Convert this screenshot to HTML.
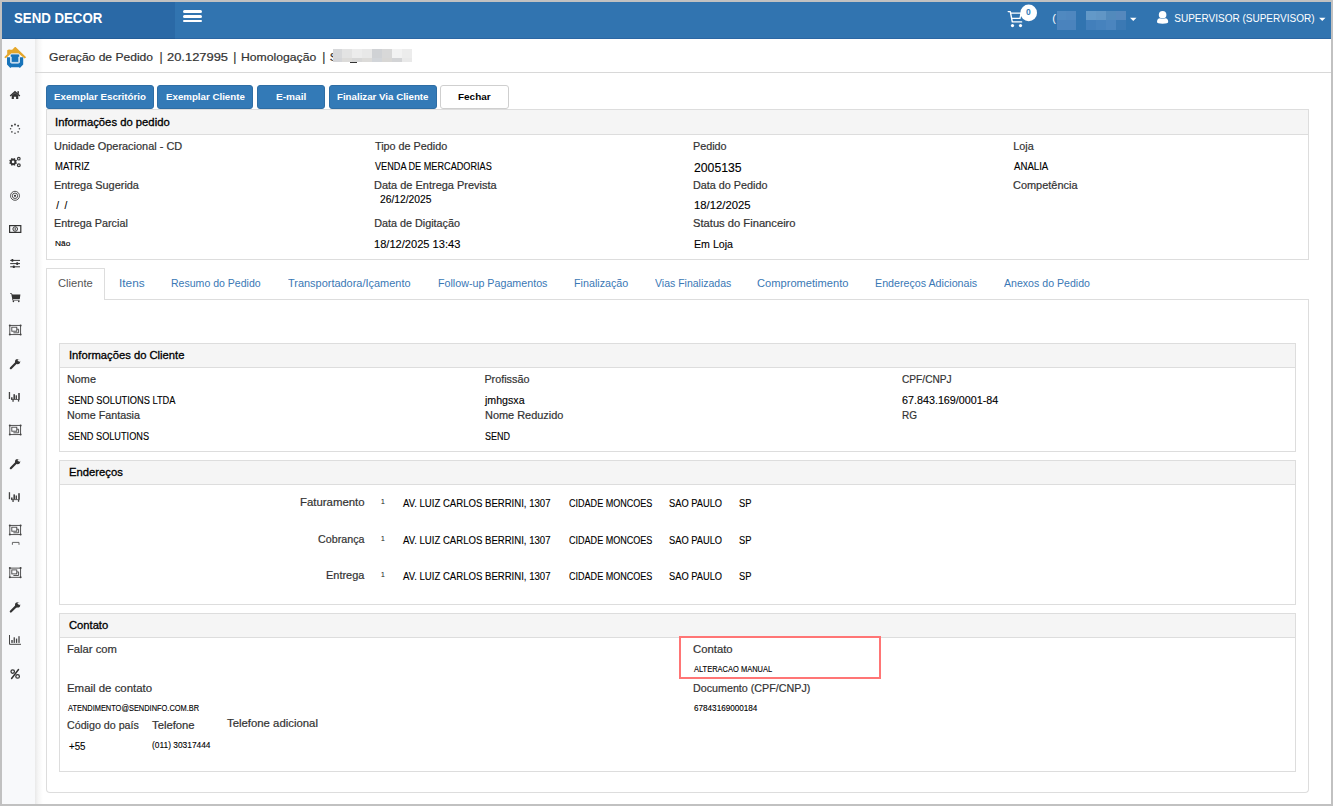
<!DOCTYPE html>
<html><head><meta charset="utf-8"><title>Geração de Pedido</title>
<style>
*{box-sizing:border-box;margin:0;padding:0}
html,body{width:1333px;height:806px;overflow:hidden;background:#fff;position:relative}
.a{position:absolute}
.t{position:absolute;display:block}
.frame{position:absolute;left:0;top:0;width:1333px;height:806px;border:2px solid #c1c1c1;z-index:50;pointer-events:none}
.nav{left:2px;top:2px;width:1329px;height:37px;background:#3174b0;border-bottom:1px solid #2b66a3}
.brand{left:2px;top:2px;width:173px;height:37px;background:#2a69a6;border-bottom:1px solid #245d98}
.side{left:2px;top:39px;width:33px;height:765px;background:#f8f9fb}
.shadow{left:35px;top:39px;width:8px;height:765px;background:linear-gradient(to right,#e9e9e9,#f6f6f6 40%,#fff)}
.hdrline{left:35px;top:72px;width:1296px;height:1px;background:#d8d8d8}
.btn{position:absolute;top:85px;height:24px;background:#337ab7;border:1px solid #2e6da4;border-radius:3px}
.btnw{background:#fff;border-color:#cfcfcf}
.panel{position:absolute;border:1px solid #ddd;background:#fff}
.ph{position:absolute;left:0;top:0;right:0;height:24px;background:#f5f5f5;border-bottom:1px solid #ddd}
.red{left:679px;top:636px;width:202px;height:43px;border:2px solid #ff7575;z-index:5}
</style></head><body>
<div class="a nav"></div><div class="a brand"></div><div class="a" style="left:183px;top:10.2px;width:19px;height:2.9px;border-radius:1.5px;background:#fff"></div><div class="a" style="left:183px;top:14.8px;width:19px;height:2.9px;border-radius:1.5px;background:#fff"></div><div class="a" style="left:183px;top:19.5px;width:19px;height:2.9px;border-radius:1.5px;background:#fff"></div><svg class="a" style="left:1000px;top:2px" width="45" height="30" viewBox="1000 2 45 30">
<path d="M1008.2 11.6 H1010.3 L1012.3 21.9 H1021.6" fill="none" stroke="#fff" stroke-width="1.4" stroke-linecap="round" stroke-linejoin="round"/>
<path d="M1010.6 13.2 H1021 L1020 18.4 H1011.6" fill="none" stroke="#fff" stroke-width="1.3" stroke-linejoin="round"/>
<circle cx="1012.5" cy="25.6" r="1.6" fill="#fff"/><circle cx="1020.5" cy="25.6" r="1.6" fill="#fff"/>
<circle cx="1028.7" cy="12.9" r="8.3" fill="#fff"/>
</svg><div class="a" style="left:1057px;top:11px;width:9px;height:9px;background:#5089c0"></div><div class="a" style="left:1057px;top:20px;width:9px;height:10px;background:#4a83bd"></div><div class="a" style="left:1066px;top:11px;width:10px;height:9px;background:#4f87bf"></div><div class="a" style="left:1066px;top:20px;width:10px;height:10px;background:#4a83bd"></div><div class="a" style="left:1086px;top:11px;width:10px;height:9px;background:#6399c8"></div><div class="a" style="left:1086px;top:20px;width:10px;height:10px;background:#427fbb"></div><div class="a" style="left:1096px;top:11px;width:10px;height:9px;background:#6196c5"></div><div class="a" style="left:1096px;top:20px;width:10px;height:10px;background:#4682bd"></div><div class="a" style="left:1106px;top:11px;width:10px;height:9px;background:#528abc"></div><div class="a" style="left:1106px;top:20px;width:10px;height:10px;background:#4b85bf"></div><div class="a" style="left:1116px;top:11px;width:10px;height:9px;background:#5588bd"></div><div class="a" style="left:1116px;top:20px;width:10px;height:10px;background:#3b79b4"></div><svg class="a" style="left:1130px;top:17px" width="7" height="5" viewBox="0 0 7 5"><path d="M0 0.8 H6.5 L3.25 4 Z" fill="#fff"/></svg><svg class="a" style="left:1319px;top:17px" width="7" height="5" viewBox="0 0 7 5"><path d="M0 0.8 H6.5 L3.25 4 Z" fill="#fff"/></svg><svg class="a" style="left:1155px;top:9px" width="15" height="16" viewBox="1155 9 15 16">
<circle cx="1162.6" cy="14.8" r="3.8" fill="#fff"/>
<path d="M1157 22 Q1157 18.6 1160 18.3 Q1162.6 19.6 1165.2 18.3 Q1168.2 18.6 1168.2 22 Q1168.2 23.7 1162.6 23.7 Q1157 23.7 1157 22 Z" fill="#fff"/>
</svg><div class="a side"></div><div class="a shadow"></div><svg class="a" style="left:2px;top:44px" width="28" height="28" viewBox="2 44 28 28">
<path d="M4.2 57.2 L7.2 54.3 V50.3 Q8.6 49 10.6 49.8 L12.2 49.8 L14.9 47 L15.6 47 L26.2 57.2 L24.6 58.4 L18.6 53.6 H11.2 L5.8 58.2 Z" fill="#e5a72b"/>
<path d="M7 57.2 H10.2 V62 Q10.2 63.4 11.8 63.4 H18.2 Q19.8 63.4 19.8 62 V57.2 H23.2 V64.6 L20.6 67.2 L19.8 68 L19 67.2 H11.3 L10.4 68 L9.6 67.2 L7 64.6 Z" fill="#1874ba"/>
<path d="M10.4 55.4 Q10.4 54 11.8 54 H18.2 Q19.6 54 19.6 55.4 Q19.6 56.5 18.8 56.9 V62.4 H11.2 V56.9 Q10.4 56.5 10.4 55.4 Z" fill="#1874ba" stroke="#d3e3f0" stroke-width="0.9"/>
</svg><svg class="a" style="left:0;top:0" width="35" height="806" viewBox="0 0 35 806"><path d="M10.2 96.1 L15 91.7 L19.8 96.1" fill="none" stroke="#333" stroke-width="1.4"/><path d="M11.7 95.6 L15 92.8 L18.3 95.6 V99 H16.1 V96.8 H13.9 V99 H11.7 Z" fill="#333"/><rect x="17.4" y="91.2" width="1.5" height="2.6" fill="#333"/><circle cx="15.00" cy="124.40" r="1.0" fill="#444"/><circle cx="18.11" cy="125.69" r="1.0" fill="#444"/><circle cx="19.40" cy="128.80" r="0.8" fill="#444"/><circle cx="18.11" cy="131.91" r="0.8" fill="#444"/><circle cx="15.00" cy="133.20" r="0.8" fill="#444"/><circle cx="11.89" cy="131.91" r="0.8" fill="#444"/><circle cx="10.60" cy="128.80" r="0.8" fill="#444"/><circle cx="11.89" cy="125.69" r="1.0" fill="#444"/><circle cx="13.1" cy="161.9" r="2.2" fill="none" stroke="#333" stroke-width="1.8"/><rect x="12.35" y="158.00" width="1.5" height="1.6" fill="#333" transform="rotate(22.5 13.1 161.9)"/><rect x="12.35" y="158.00" width="1.5" height="1.6" fill="#333" transform="rotate(67.5 13.1 161.9)"/><rect x="12.35" y="158.00" width="1.5" height="1.6" fill="#333" transform="rotate(112.5 13.1 161.9)"/><rect x="12.35" y="158.00" width="1.5" height="1.6" fill="#333" transform="rotate(157.5 13.1 161.9)"/><rect x="12.35" y="158.00" width="1.5" height="1.6" fill="#333" transform="rotate(202.5 13.1 161.9)"/><rect x="12.35" y="158.00" width="1.5" height="1.6" fill="#333" transform="rotate(247.5 13.1 161.9)"/><rect x="12.35" y="158.00" width="1.5" height="1.6" fill="#333" transform="rotate(292.5 13.1 161.9)"/><rect x="12.35" y="158.00" width="1.5" height="1.6" fill="#333" transform="rotate(337.5 13.1 161.9)"/><circle cx="18.8" cy="158.7" r="1.3" fill="none" stroke="#3a3a3a" stroke-width="1.2"/><circle cx="18.8" cy="165.2" r="1.4" fill="none" stroke="#3a3a3a" stroke-width="1.2"/><circle cx="15" cy="195.8" r="4.5" fill="none" stroke="#444" stroke-width="0.9"/><circle cx="15" cy="195.8" r="2.7" fill="none" stroke="#444" stroke-width="0.9"/><circle cx="15" cy="195.8" r="1.1" fill="#333"/><rect x="9.6" y="225.6" width="11.2" height="6.8" fill="none" stroke="#333" stroke-width="1.2"/><ellipse cx="15.2" cy="229" rx="2.3" ry="2.3" fill="none" stroke="#333" stroke-width="1"/><rect x="14.7" y="227.6" width="1" height="2.8" fill="#333"/><rect x="10.2" y="259.9" width="9.8" height="1" fill="#333"/><rect x="11.4" y="259.09999999999997" width="2" height="2.6" rx="0.6" fill="#333"/><rect x="10.2" y="263.1" width="9.8" height="1" fill="#333"/><rect x="16.2" y="262.3" width="2" height="2.6" rx="0.6" fill="#333"/><rect x="10.2" y="266.3" width="9.8" height="1" fill="#333"/><rect x="12.8" y="265.5" width="2" height="2.6" rx="0.6" fill="#333"/><path d="M10.1 293.2 H11.6 L12.6 294.6 H20.4 L19.8 299 H13 L13.2 299.8 H19.6 V300.6 H12.5 L11.3 294 H10.1 Z" fill="#333"/><circle cx="13.4" cy="301.4" r="0.8" fill="#333"/><circle cx="18.8" cy="301.4" r="0.8" fill="#333"/><rect x="9.8" y="325.40000000000003" width="10.8" height="9.2" fill="none" stroke="#444" stroke-width="0.9"/><circle cx="9.8" cy="325.40000000000003" r="1" fill="#444"/><circle cx="20.6" cy="325.40000000000003" r="1" fill="#444"/><circle cx="9.8" cy="334.6" r="1" fill="#444"/><circle cx="20.6" cy="334.6" r="1" fill="#444"/><rect x="11.8" y="327.20000000000005" width="5" height="4" fill="none" stroke="#444" stroke-width="0.9"/><path d="M13.4 332.8 H18.6 V329.20000000000005 H16.8" fill="none" stroke="#444" stroke-width="0.9"/><path d="M10.8 368.2 L16.2 362.8" stroke="#333" stroke-width="2.2" stroke-linecap="round"/><circle cx="17.6" cy="361.6" r="2.6" fill="#333"/><path d="M17.8 359.5 L19.2 360.9 L20.6 359" stroke="#f8f9fb" stroke-width="1.4" fill="none"/><rect x="8.8" y="392.00" width="1.3" height="7" fill="#444"/><rect x="11" y="397.30" width="1.6" height="2.2" fill="#444"/><rect x="13.4" y="394.20" width="1.6" height="5" fill="#444"/><rect x="15.6" y="395.30" width="1.4" height="4" fill="#444"/><rect x="18.2" y="393.00" width="1.6" height="6" fill="#444"/><rect x="12.4" y="399.20" width="1.3" height="2.6" fill="#444"/><rect x="17.9" y="399.20" width="1.3" height="2.4" fill="#444"/><rect x="11" y="399.10" width="8.8" height="0.8" fill="#444"/><rect x="9.8" y="425.40000000000003" width="10.8" height="9.2" fill="none" stroke="#444" stroke-width="0.9"/><circle cx="9.8" cy="425.40000000000003" r="1" fill="#444"/><circle cx="20.6" cy="425.40000000000003" r="1" fill="#444"/><circle cx="9.8" cy="434.6" r="1" fill="#444"/><circle cx="20.6" cy="434.6" r="1" fill="#444"/><rect x="11.8" y="427.20000000000005" width="5" height="4" fill="none" stroke="#444" stroke-width="0.9"/><path d="M13.4 432.8 H18.6 V429.20000000000005 H16.8" fill="none" stroke="#444" stroke-width="0.9"/><path d="M10.8 468.2 L16.2 462.8" stroke="#333" stroke-width="2.2" stroke-linecap="round"/><circle cx="17.6" cy="461.6" r="2.6" fill="#333"/><path d="M17.8 459.5 L19.2 460.9 L20.6 459" stroke="#f8f9fb" stroke-width="1.4" fill="none"/><rect x="8.8" y="492.20" width="1.3" height="7" fill="#444"/><rect x="11" y="497.50" width="1.6" height="2.2" fill="#444"/><rect x="13.4" y="494.40" width="1.6" height="5" fill="#444"/><rect x="15.6" y="495.50" width="1.4" height="4" fill="#444"/><rect x="18.2" y="493.20" width="1.6" height="6" fill="#444"/><rect x="12.4" y="499.40" width="1.3" height="2.6" fill="#444"/><rect x="17.9" y="499.40" width="1.3" height="2.4" fill="#444"/><rect x="11" y="499.30" width="8.8" height="0.8" fill="#444"/><rect x="9.8" y="525.4" width="10.8" height="9.2" fill="none" stroke="#444" stroke-width="0.9"/><circle cx="9.8" cy="525.4" r="1" fill="#444"/><circle cx="20.6" cy="525.4" r="1" fill="#444"/><circle cx="9.8" cy="534.6" r="1" fill="#444"/><circle cx="20.6" cy="534.6" r="1" fill="#444"/><rect x="11.8" y="527.2" width="5" height="4" fill="none" stroke="#444" stroke-width="0.9"/><path d="M13.4 532.8000000000001 H18.6 V529.2 H16.8" fill="none" stroke="#444" stroke-width="0.9"/><path d="M12.4 544.8 V542.4 H19 V544.8" fill="none" stroke="#555" stroke-width="0.9"/><rect x="9.8" y="568.0999999999999" width="10.8" height="9.2" fill="none" stroke="#444" stroke-width="0.9"/><circle cx="9.8" cy="568.0999999999999" r="1" fill="#444"/><circle cx="20.6" cy="568.0999999999999" r="1" fill="#444"/><circle cx="9.8" cy="577.3" r="1" fill="#444"/><circle cx="20.6" cy="577.3" r="1" fill="#444"/><rect x="11.8" y="569.9" width="5" height="4" fill="none" stroke="#444" stroke-width="0.9"/><path d="M13.4 575.5 H18.6 V571.9 H16.8" fill="none" stroke="#444" stroke-width="0.9"/><path d="M10.8 611.5 L16.2 606.0999999999999" stroke="#333" stroke-width="2.2" stroke-linecap="round"/><circle cx="17.6" cy="604.9" r="2.6" fill="#333"/><path d="M17.8 602.8 L19.2 604.1999999999999 L20.6 602.3" stroke="#f8f9fb" stroke-width="1.4" fill="none"/><path d="M9.5 635 V644.3 H21" fill="none" stroke="#444" stroke-width="1"/><rect x="11.3" y="640" width="1.4" height="2.9" fill="#444"/><rect x="13.6" y="637.3" width="1.3" height="5.6" fill="#444"/><rect x="15.9" y="638.6" width="1.3" height="4.3" fill="#444"/><rect x="18.3" y="636.2" width="1.4" height="6.7" fill="#555"/><circle cx="12.7" cy="671.5" r="1.75" fill="none" stroke="#333" stroke-width="1.25"/><circle cx="17.6" cy="676.4" r="1.8" fill="none" stroke="#333" stroke-width="1.25"/><path d="M11.6 678.5 L18.5 669.5" stroke="#333" stroke-width="1.5" stroke-linecap="round"/></svg><div class="a hdrline"></div><div class="a" style="left:350px;top:62px;width:7px;height:1px;background:#333"></div><div class="btn" style="left:46px;width:108px"></div><div class="btn" style="left:157px;width:96px"></div><div class="btn" style="left:257px;width:68px"></div><div class="btn" style="left:329px;width:108px"></div><div class="btn btnw" style="left:440px;width:69px"></div><div class="panel" style="left:46px;top:109px;width:1263px;height:151px"><div class="ph" style="height:25px"></div></div><div class="a" style="left:46px;top:299px;width:1263px;height:494px;border:1px solid #ddd;border-top:none;border-radius:0 0 4px 4px"></div><div class="a" style="left:104px;top:299px;width:1205px;height:1px;background:#ddd"></div><div class="a" style="left:46px;top:268px;width:59px;height:32px;border:1px solid #ddd;border-bottom:none;border-radius:1px 1px 0 0;background:#fff"></div><div class="panel" style="left:59px;top:343px;width:1237px;height:109px"><div class="ph" style="height:24px"></div></div><div class="panel" style="left:59px;top:460px;width:1237px;height:145px"><div class="ph" style="height:24px"></div></div><div class="panel" style="left:59px;top:613px;width:1237px;height:159px"><div class="ph" style="height:24px"></div></div><div class="a red"></div>
<span class=t style="left:13.85px;top:10px;font-family:'Liberation Sans',sans-serif;font-size:15.5px;font-weight:bold;line-height:15.5px;white-space:pre;color:#fff;transform:scaleX(0.8539);transform-origin:0 0">SEND DECOR</span><span class=t style="left:1174.30px;top:14px;font-family:'Liberation Sans',sans-serif;font-size:10px;font-weight:normal;line-height:10px;white-space:pre;color:#fff">SUPERVISOR (SUPERVISOR)</span><span class=t style="left:1052.30px;top:13px;font-family:'Liberation Sans',sans-serif;font-size:11px;font-weight:normal;line-height:11px;white-space:pre;color:#fff">(</span><span class=t style="left:1026.00px;top:8px;font-family:'Liberation Sans',sans-serif;font-size:8.5px;font-weight:bold;line-height:8.5px;white-space:pre;color:#337ab7">0</span><span class=t style="left:49.09px;top:52px;font-family:'Liberation Sans',sans-serif;font-size:11.5px;font-weight:normal;line-height:11.5px;white-space:pre;-webkit-text-stroke:0.2px #333;color:#333;transform:scaleX(1.0498);transform-origin:0 0">Geração de Pedido</span><span class=t style="left:159.50px;top:51px;font-family:'Liberation Sans',sans-serif;font-size:12px;font-weight:normal;line-height:12px;white-space:pre;-webkit-text-stroke:0.2px #333;color:#333">|</span><span class=t style="left:166.98px;top:52px;font-family:'Liberation Sans',sans-serif;font-size:11.5px;font-weight:normal;line-height:11.5px;white-space:pre;-webkit-text-stroke:0.2px #333;color:#333;transform:scaleX(1.1232);transform-origin:0 0">20.127995</span><span class=t style="left:233.30px;top:51px;font-family:'Liberation Sans',sans-serif;font-size:12px;font-weight:normal;line-height:12px;white-space:pre;-webkit-text-stroke:0.2px #333;color:#333">|</span><span class=t style="left:240.74px;top:52px;font-family:'Liberation Sans',sans-serif;font-size:11.5px;font-weight:normal;line-height:11.5px;white-space:pre;-webkit-text-stroke:0.2px #333;color:#333;transform:scaleX(1.0600);transform-origin:0 0">Homologação</span><span class=t style="left:322.20px;top:51px;font-family:'Liberation Sans',sans-serif;font-size:12px;font-weight:normal;line-height:12px;white-space:pre;-webkit-text-stroke:0.2px #333;color:#333">|</span><span class=t style="left:329.76px;top:52px;font-family:'Liberation Sans',sans-serif;font-size:11.5px;font-weight:normal;line-height:11.5px;white-space:pre;-webkit-text-stroke:0.2px #333;color:#333">S</span><span class=t style="left:53.58px;top:92px;font-family:'Liberation Sans',sans-serif;font-size:9.5px;font-weight:bold;line-height:9.5px;white-space:pre;color:#fff;transform:scaleX(1.0236);transform-origin:0 0">Exemplar Escritório</span><span class=t style="left:165.68px;top:92px;font-family:'Liberation Sans',sans-serif;font-size:9.5px;font-weight:bold;line-height:9.5px;white-space:pre;color:#fff;transform:scaleX(1.0228);transform-origin:0 0">Exemplar Cliente</span><span class=t style="left:275.58px;top:92px;font-family:'Liberation Sans',sans-serif;font-size:9.5px;font-weight:bold;line-height:9.5px;white-space:pre;color:#fff;transform:scaleX(1.0623);transform-origin:0 0">E-mail</span><span class=t style="left:337.26px;top:92px;font-family:'Liberation Sans',sans-serif;font-size:9.5px;font-weight:bold;line-height:9.5px;white-space:pre;color:#fff;transform:scaleX(1.0215);transform-origin:0 0">Finalizar Via Cliente</span><span class=t style="left:458.15px;top:92px;font-family:'Liberation Sans',sans-serif;font-size:9.5px;font-weight:bold;line-height:9.5px;white-space:pre;color:#000;transform:scaleX(1.0467);transform-origin:0 0">Fechar</span><span class=t style="left:55.30px;top:117px;font-family:'Liberation Sans',sans-serif;font-size:11px;font-weight:normal;line-height:11px;white-space:pre;-webkit-text-stroke:0.3px #000;color:#000;transform:scaleX(1.0247);transform-origin:0 0">Informações do pedido</span><span class=t style="left:54.41px;top:141px;font-family:'Liberation Sans',sans-serif;font-size:10.8px;font-weight:normal;line-height:10.8px;white-space:pre;-webkit-text-stroke:0.2px #333;color:#333;transform:scaleX(1.0121);transform-origin:0 0">Unidade Operacional - CD</span><span class=t style="left:54.68px;top:162px;font-family:'Liberation Sans',sans-serif;font-size:10px;font-weight:normal;line-height:10px;white-space:pre;-webkit-text-stroke:0.12px #000;color:#000;transform:scaleX(0.9480);transform-origin:0 0">MATRIZ</span><span class=t style="left:53.99px;top:180px;font-family:'Liberation Sans',sans-serif;font-size:10.8px;font-weight:normal;line-height:10.8px;white-space:pre;-webkit-text-stroke:0.2px #333;color:#333;transform:scaleX(1.0108);transform-origin:0 0">Entrega Sugerida</span><span class=t style="left:56.20px;top:201px;font-family:'Liberation Sans',sans-serif;font-size:10px;font-weight:normal;line-height:10px;white-space:pre;-webkit-text-stroke:0.12px #000;color:#000">/  /</span><span class=t style="left:54.00px;top:218px;font-family:'Liberation Sans',sans-serif;font-size:10.8px;font-weight:normal;line-height:10.8px;white-space:pre;-webkit-text-stroke:0.2px #333;color:#333">Entrega Parcial</span><span class=t style="left:54.76px;top:240px;font-family:'Liberation Sans',sans-serif;font-size:8px;font-weight:normal;line-height:8px;white-space:pre;-webkit-text-stroke:0.12px #000;color:#000;transform:scaleX(1.0447);transform-origin:0 0">Não</span><span class=t style="left:375.00px;top:141px;font-family:'Liberation Sans',sans-serif;font-size:10.8px;font-weight:normal;line-height:10.8px;white-space:pre;-webkit-text-stroke:0.2px #333;color:#333">Tipo de Pedido</span><span class=t style="left:374.64px;top:162px;font-family:'Liberation Sans',sans-serif;font-size:10px;font-weight:normal;line-height:10px;white-space:pre;-webkit-text-stroke:0.12px #000;color:#000;transform:scaleX(0.9135);transform-origin:0 0">VENDA DE MERCADORIAS</span><span class=t style="left:374.16px;top:180px;font-family:'Liberation Sans',sans-serif;font-size:10.8px;font-weight:normal;line-height:10.8px;white-space:pre;-webkit-text-stroke:0.2px #333;color:#333;transform:scaleX(1.0167);transform-origin:0 0">Data de Entrega Prevista</span><span class=t style="left:380.12px;top:195px;font-family:'Liberation Sans',sans-serif;font-size:10px;font-weight:normal;line-height:10px;white-space:pre;-webkit-text-stroke:0.12px #000;color:#000;transform:scaleX(1.0293);transform-origin:0 0">26/12/2025</span><span class=t style="left:374.18px;top:218px;font-family:'Liberation Sans',sans-serif;font-size:10.8px;font-weight:normal;line-height:10.8px;white-space:pre;-webkit-text-stroke:0.2px #333;color:#333">Data de Digitação</span><span class=t style="left:373.99px;top:239px;font-family:'Liberation Sans',sans-serif;font-size:11px;font-weight:normal;line-height:11px;white-space:pre;-webkit-text-stroke:0.12px #000;color:#000;transform:scaleX(1.0083);transform-origin:0 0">18/12/2025 13:43</span><span class=t style="left:693.00px;top:141px;font-family:'Liberation Sans',sans-serif;font-size:10.8px;font-weight:normal;line-height:10.8px;white-space:pre;-webkit-text-stroke:0.2px #333;color:#333">Pedido</span><span class=t style="left:693.61px;top:162px;font-family:'Liberation Sans',sans-serif;font-size:12px;font-weight:normal;line-height:12px;white-space:pre;-webkit-text-stroke:0.12px #000;color:#000;transform:scaleX(1.0205);transform-origin:0 0">2005135</span><span class=t style="left:693.00px;top:180px;font-family:'Liberation Sans',sans-serif;font-size:10.8px;font-weight:normal;line-height:10.8px;white-space:pre;-webkit-text-stroke:0.2px #333;color:#333">Data do Pedido</span><span class=t style="left:693.50px;top:200px;font-family:'Liberation Sans',sans-serif;font-size:11px;font-weight:normal;line-height:11px;white-space:pre;-webkit-text-stroke:0.12px #000;color:#000;transform:scaleX(1.0271);transform-origin:0 0">18/12/2025</span><span class=t style="left:693.39px;top:218px;font-family:'Liberation Sans',sans-serif;font-size:10.8px;font-weight:normal;line-height:10.8px;white-space:pre;-webkit-text-stroke:0.2px #333;color:#333;transform:scaleX(1.0357);transform-origin:0 0">Status do Financeiro</span><span class=t style="left:693.97px;top:239px;font-family:'Liberation Sans',sans-serif;font-size:11px;font-weight:normal;line-height:11px;white-space:pre;-webkit-text-stroke:0.12px #000;color:#000;transform:scaleX(0.9655);transform-origin:0 0">Em Loja</span><span class=t style="left:1013.28px;top:141px;font-family:'Liberation Sans',sans-serif;font-size:10.8px;font-weight:normal;line-height:10.8px;white-space:pre;-webkit-text-stroke:0.2px #333;color:#333">Loja</span><span class=t style="left:1013.66px;top:162px;font-family:'Liberation Sans',sans-serif;font-size:10px;font-weight:normal;line-height:10px;white-space:pre;-webkit-text-stroke:0.12px #000;color:#000;transform:scaleX(0.9639);transform-origin:0 0">ANALIA</span><span class=t style="left:1013.35px;top:180px;font-family:'Liberation Sans',sans-serif;font-size:10.8px;font-weight:normal;line-height:10.8px;white-space:pre;-webkit-text-stroke:0.2px #333;color:#333;transform:scaleX(1.0137);transform-origin:0 0">Competência</span><span class=t style="left:58.32px;top:278px;font-family:'Liberation Sans',sans-serif;font-size:11px;font-weight:normal;line-height:11px;white-space:pre;color:#555;transform:scaleX(1.0167);transform-origin:0 0">Cliente</span><span class=t style="left:118.81px;top:278px;font-family:'Liberation Sans',sans-serif;font-size:11px;font-weight:normal;line-height:11px;white-space:pre;color:#3a78b5;transform:scaleX(1.0735);transform-origin:0 0">Itens</span><span class=t style="left:171.07px;top:278px;font-family:'Liberation Sans',sans-serif;font-size:11px;font-weight:normal;line-height:11px;white-space:pre;color:#3a78b5;transform:scaleX(0.9581);transform-origin:0 0">Resumo do Pedido</span><span class=t style="left:287.85px;top:278px;font-family:'Liberation Sans',sans-serif;font-size:11px;font-weight:normal;line-height:11px;white-space:pre;color:#3a78b5;transform:scaleX(0.9952);transform-origin:0 0">Transportadora/Içamento</span><span class=t style="left:437.63px;top:278px;font-family:'Liberation Sans',sans-serif;font-size:11px;font-weight:normal;line-height:11px;white-space:pre;color:#3a78b5;transform:scaleX(0.9730);transform-origin:0 0">Follow-up Pagamentos</span><span class=t style="left:573.72px;top:278px;font-family:'Liberation Sans',sans-serif;font-size:11px;font-weight:normal;line-height:11px;white-space:pre;color:#3a78b5;transform:scaleX(0.9759);transform-origin:0 0">Finalização</span><span class=t style="left:654.76px;top:278px;font-family:'Liberation Sans',sans-serif;font-size:11px;font-weight:normal;line-height:11px;white-space:pre;color:#3a78b5;transform:scaleX(0.9542);transform-origin:0 0">Vias Finalizadas</span><span class=t style="left:756.99px;top:278px;font-family:'Liberation Sans',sans-serif;font-size:11px;font-weight:normal;line-height:11px;white-space:pre;color:#3a78b5;transform:scaleX(1.0112);transform-origin:0 0">Comprometimento</span><span class=t style="left:874.94px;top:278px;font-family:'Liberation Sans',sans-serif;font-size:11px;font-weight:normal;line-height:11px;white-space:pre;color:#3a78b5;transform:scaleX(0.9718);transform-origin:0 0">Endereços Adicionais</span><span class=t style="left:1004.41px;top:278px;font-family:'Liberation Sans',sans-serif;font-size:11px;font-weight:normal;line-height:11px;white-space:pre;color:#3a78b5;transform:scaleX(0.9622);transform-origin:0 0">Anexos do Pedido</span><span class=t style="left:68.96px;top:350px;font-family:'Liberation Sans',sans-serif;font-size:11px;font-weight:normal;line-height:11px;white-space:pre;-webkit-text-stroke:0.3px #000;color:#000;transform:scaleX(1.0208);transform-origin:0 0">Informações do Cliente</span><span class=t style="left:66.99px;top:374px;font-family:'Liberation Sans',sans-serif;font-size:10.8px;font-weight:normal;line-height:10.8px;white-space:pre;-webkit-text-stroke:0.2px #333;color:#333;transform:scaleX(1.0052);transform-origin:0 0">Nome</span><span class=t style="left:67.87px;top:396px;font-family:'Liberation Sans',sans-serif;font-size:10px;font-weight:normal;line-height:10px;white-space:pre;-webkit-text-stroke:0.12px #000;color:#000;transform:scaleX(0.9270);transform-origin:0 0">SEND SOLUTIONS LTDA</span><span class=t style="left:66.99px;top:410px;font-family:'Liberation Sans',sans-serif;font-size:10.8px;font-weight:normal;line-height:10.8px;white-space:pre;-webkit-text-stroke:0.2px #333;color:#333;transform:scaleX(0.9954);transform-origin:0 0">Nome Fantasia</span><span class=t style="left:68.06px;top:432px;font-family:'Liberation Sans',sans-serif;font-size:10px;font-weight:normal;line-height:10px;white-space:pre;-webkit-text-stroke:0.12px #000;color:#000;transform:scaleX(0.9167);transform-origin:0 0">SEND SOLUTIONS</span><span class=t style="left:484.40px;top:374px;font-family:'Liberation Sans',sans-serif;font-size:10.8px;font-weight:normal;line-height:10.8px;white-space:pre;-webkit-text-stroke:0.2px #333;color:#333">Profissão</span><span class=t style="left:485.19px;top:396px;font-family:'Liberation Sans',sans-serif;font-size:10px;font-weight:normal;line-height:10px;white-space:pre;-webkit-text-stroke:0.12px #000;color:#000;transform:scaleX(1.0616);transform-origin:0 0">jmhgsxa</span><span class=t style="left:484.97px;top:410px;font-family:'Liberation Sans',sans-serif;font-size:10.8px;font-weight:normal;line-height:10.8px;white-space:pre;-webkit-text-stroke:0.2px #333;color:#333;transform:scaleX(1.0131);transform-origin:0 0">Nome Reduzido</span><span class=t style="left:485.28px;top:432px;font-family:'Liberation Sans',sans-serif;font-size:10px;font-weight:normal;line-height:10px;white-space:pre;-webkit-text-stroke:0.12px #000;color:#000;transform:scaleX(0.8987);transform-origin:0 0">SEND</span><span class=t style="left:902.27px;top:374px;font-family:'Liberation Sans',sans-serif;font-size:10.8px;font-weight:normal;line-height:10.8px;white-space:pre;-webkit-text-stroke:0.2px #333;color:#333;transform:scaleX(0.9408);transform-origin:0 0">CPF/CNPJ</span><span class=t style="left:902.22px;top:395px;font-family:'Liberation Sans',sans-serif;font-size:10.5px;font-weight:normal;line-height:10.5px;white-space:pre;-webkit-text-stroke:0.12px #000;color:#000;transform:scaleX(1.0242);transform-origin:0 0">67.843.169/0001-84</span><span class=t style="left:901.71px;top:410px;font-family:'Liberation Sans',sans-serif;font-size:10.8px;font-weight:normal;line-height:10.8px;white-space:pre;-webkit-text-stroke:0.2px #333;color:#333;transform:scaleX(0.9266);transform-origin:0 0">RG</span><span class=t style="left:68.54px;top:467px;font-family:'Liberation Sans',sans-serif;font-size:11px;font-weight:normal;line-height:11px;white-space:pre;-webkit-text-stroke:0.3px #000;color:#000;transform:scaleX(1.0237);transform-origin:0 0">Endereços</span><span class=t style="left:300.14px;top:497px;font-family:'Liberation Sans',sans-serif;font-size:10.8px;font-weight:normal;line-height:10.8px;white-space:pre;-webkit-text-stroke:0.2px #333;color:#333;transform:scaleX(1.0550);transform-origin:0 0">Faturamento</span><span class=t style="left:380.80px;top:498px;font-family:'Liberation Sans',sans-serif;font-size:7.5px;font-weight:normal;line-height:7.5px;white-space:pre;color:#222">1</span><span class=t style="left:402.66px;top:499px;font-family:'Liberation Sans',sans-serif;font-size:10px;font-weight:normal;line-height:10px;white-space:pre;-webkit-text-stroke:0.12px #000;color:#000;transform:scaleX(0.9581);transform-origin:0 0">AV. LUIZ CARLOS BERRINI, 1307</span><span class=t style="left:569.23px;top:499px;font-family:'Liberation Sans',sans-serif;font-size:10px;font-weight:normal;line-height:10px;white-space:pre;-webkit-text-stroke:0.12px #000;color:#000;transform:scaleX(0.9042);transform-origin:0 0">CIDADE MONCOES</span><span class=t style="left:669.44px;top:499px;font-family:'Liberation Sans',sans-serif;font-size:10px;font-weight:normal;line-height:10px;white-space:pre;-webkit-text-stroke:0.12px #000;color:#000;transform:scaleX(0.9302);transform-origin:0 0">SAO PAULO</span><span class=t style="left:738.77px;top:499px;font-family:'Liberation Sans',sans-serif;font-size:10px;font-weight:normal;line-height:10px;white-space:pre;-webkit-text-stroke:0.12px #000;color:#000;transform:scaleX(0.9333);transform-origin:0 0">SP</span><span class=t style="left:317.70px;top:534px;font-family:'Liberation Sans',sans-serif;font-size:10.8px;font-weight:normal;line-height:10.8px;white-space:pre;-webkit-text-stroke:0.2px #333;color:#333;transform:scaleX(0.9925);transform-origin:0 0">Cobrança</span><span class=t style="left:380.80px;top:535px;font-family:'Liberation Sans',sans-serif;font-size:7.5px;font-weight:normal;line-height:7.5px;white-space:pre;color:#222">1</span><span class=t style="left:402.66px;top:536px;font-family:'Liberation Sans',sans-serif;font-size:10px;font-weight:normal;line-height:10px;white-space:pre;-webkit-text-stroke:0.12px #000;color:#000;transform:scaleX(0.9581);transform-origin:0 0">AV. LUIZ CARLOS BERRINI, 1307</span><span class=t style="left:569.23px;top:536px;font-family:'Liberation Sans',sans-serif;font-size:10px;font-weight:normal;line-height:10px;white-space:pre;-webkit-text-stroke:0.12px #000;color:#000;transform:scaleX(0.9042);transform-origin:0 0">CIDADE MONCOES</span><span class=t style="left:669.44px;top:536px;font-family:'Liberation Sans',sans-serif;font-size:10px;font-weight:normal;line-height:10px;white-space:pre;-webkit-text-stroke:0.12px #000;color:#000;transform:scaleX(0.9302);transform-origin:0 0">SAO PAULO</span><span class=t style="left:738.77px;top:536px;font-family:'Liberation Sans',sans-serif;font-size:10px;font-weight:normal;line-height:10px;white-space:pre;-webkit-text-stroke:0.12px #000;color:#000;transform:scaleX(0.9333);transform-origin:0 0">SP</span><span class=t style="left:325.99px;top:570px;font-family:'Liberation Sans',sans-serif;font-size:10.8px;font-weight:normal;line-height:10.8px;white-space:pre;-webkit-text-stroke:0.2px #333;color:#333;transform:scaleX(1.0135);transform-origin:0 0">Entrega</span><span class=t style="left:380.80px;top:571px;font-family:'Liberation Sans',sans-serif;font-size:7.5px;font-weight:normal;line-height:7.5px;white-space:pre;color:#222">1</span><span class=t style="left:402.66px;top:572px;font-family:'Liberation Sans',sans-serif;font-size:10px;font-weight:normal;line-height:10px;white-space:pre;-webkit-text-stroke:0.12px #000;color:#000;transform:scaleX(0.9581);transform-origin:0 0">AV. LUIZ CARLOS BERRINI, 1307</span><span class=t style="left:569.23px;top:572px;font-family:'Liberation Sans',sans-serif;font-size:10px;font-weight:normal;line-height:10px;white-space:pre;-webkit-text-stroke:0.12px #000;color:#000;transform:scaleX(0.9042);transform-origin:0 0">CIDADE MONCOES</span><span class=t style="left:669.44px;top:572px;font-family:'Liberation Sans',sans-serif;font-size:10px;font-weight:normal;line-height:10px;white-space:pre;-webkit-text-stroke:0.12px #000;color:#000;transform:scaleX(0.9302);transform-origin:0 0">SAO PAULO</span><span class=t style="left:738.77px;top:572px;font-family:'Liberation Sans',sans-serif;font-size:10px;font-weight:normal;line-height:10px;white-space:pre;-webkit-text-stroke:0.12px #000;color:#000;transform:scaleX(0.9333);transform-origin:0 0">SP</span><span class=t style="left:68.72px;top:620px;font-family:'Liberation Sans',sans-serif;font-size:11px;font-weight:normal;line-height:11px;white-space:pre;-webkit-text-stroke:0.3px #000;color:#000;transform:scaleX(1.0174);transform-origin:0 0">Contato</span><span class=t style="left:67.27px;top:644px;font-family:'Liberation Sans',sans-serif;font-size:10.8px;font-weight:normal;line-height:10.8px;white-space:pre;-webkit-text-stroke:0.2px #333;color:#333;transform:scaleX(1.0407);transform-origin:0 0">Falar com</span><span class=t style="left:66.94px;top:683px;font-family:'Liberation Sans',sans-serif;font-size:10.8px;font-weight:normal;line-height:10.8px;white-space:pre;-webkit-text-stroke:0.2px #333;color:#333;transform:scaleX(1.0582);transform-origin:0 0">Email de contato</span><span class=t style="left:68.30px;top:704px;font-family:'Liberation Sans',sans-serif;font-size:8.6px;font-weight:normal;line-height:8.6px;white-space:pre;-webkit-text-stroke:0.12px #000;color:#000;transform:scaleX(0.8648);transform-origin:0 0">ATENDIMENTO@SENDINFO.COM.BR</span><span class=t style="left:67.48px;top:720px;font-family:'Liberation Sans',sans-serif;font-size:10.8px;font-weight:normal;line-height:10.8px;white-space:pre;-webkit-text-stroke:0.2px #333;color:#333;transform:scaleX(0.9891);transform-origin:0 0">Código do país</span><span class=t style="left:151.64px;top:720px;font-family:'Liberation Sans',sans-serif;font-size:10.8px;font-weight:normal;line-height:10.8px;white-space:pre;-webkit-text-stroke:0.2px #333;color:#333;transform:scaleX(1.0439);transform-origin:0 0">Telefone</span><span class=t style="left:227.38px;top:718px;font-family:'Liberation Sans',sans-serif;font-size:11px;font-weight:normal;line-height:11px;white-space:pre;-webkit-text-stroke:0.2px #333;color:#333;transform:scaleX(1.0324);transform-origin:0 0">Telefone adicional</span><span class=t style="left:69.04px;top:741px;font-family:'Liberation Sans',sans-serif;font-size:10.5px;font-weight:normal;line-height:10.5px;white-space:pre;-webkit-text-stroke:0.12px #000;color:#000;transform:scaleX(0.9237);transform-origin:0 0">+55</span><span class=t style="left:151.97px;top:741px;font-family:'Liberation Sans',sans-serif;font-size:9px;font-weight:normal;line-height:9px;white-space:pre;-webkit-text-stroke:0.12px #000;color:#000;transform:scaleX(0.9304);transform-origin:0 0">(011) 30317444</span><span class=t style="left:693.28px;top:644px;font-family:'Liberation Sans',sans-serif;font-size:10.8px;font-weight:normal;line-height:10.8px;white-space:pre;-webkit-text-stroke:0.2px #333;color:#333;transform:scaleX(1.0479);transform-origin:0 0">Contato</span><span class=t style="left:694.41px;top:665px;font-family:'Liberation Sans',sans-serif;font-size:9px;font-weight:normal;line-height:9px;white-space:pre;-webkit-text-stroke:0.12px #000;color:#000;transform:scaleX(0.8322);transform-origin:0 0">ALTERACAO MANUAL</span><span class=t style="left:692.79px;top:683px;font-family:'Liberation Sans',sans-serif;font-size:10.8px;font-weight:normal;line-height:10.8px;white-space:pre;-webkit-text-stroke:0.2px #333;color:#333;transform:scaleX(0.9926);transform-origin:0 0">Documento (CPF/CNPJ)</span><span class=t style="left:694.35px;top:704px;font-family:'Liberation Sans',sans-serif;font-size:8.8px;font-weight:normal;line-height:8.8px;white-space:pre;-webkit-text-stroke:0.12px #000;color:#000;transform:scaleX(0.9254);transform-origin:0 0">67843169000184</span>
<div class="a" style="left:333px;top:49px;width:9px;height:9px;background:#d7d8da;z-index:3"></div><div class="a" style="left:333px;top:58px;width:9px;height:4px;background:#d4d5d8;z-index:3"></div><div class="a" style="left:342px;top:49px;width:10px;height:9px;background:#e3e3e3;z-index:3"></div><div class="a" style="left:342px;top:58px;width:10px;height:4px;background:#dcdbd9;z-index:3"></div><div class="a" style="left:352px;top:49px;width:10px;height:9px;background:#ececec;z-index:3"></div><div class="a" style="left:352px;top:58px;width:10px;height:4px;background:#d7d7d7;z-index:3"></div><div class="a" style="left:362px;top:49px;width:10px;height:9px;background:#e8e8e8;z-index:3"></div><div class="a" style="left:362px;top:58px;width:10px;height:4px;background:#dcdbd9;z-index:3"></div><div class="a" style="left:372px;top:49px;width:10px;height:9px;background:#d0d2d5;z-index:3"></div><div class="a" style="left:372px;top:58px;width:10px;height:4px;background:#d2d5d9;z-index:3"></div><div class="a" style="left:382px;top:49px;width:10px;height:9px;background:#d8d8d8;z-index:3"></div><div class="a" style="left:382px;top:58px;width:10px;height:4px;background:#d8d7d5;z-index:3"></div><div class="a" style="left:392px;top:49px;width:10px;height:9px;background:#f2f2f2;z-index:3"></div><div class="a" style="left:392px;top:58px;width:10px;height:4px;background:#d3d4d6;z-index:3"></div><div class="a" style="left:402px;top:49px;width:10px;height:9px;background:#ececec;z-index:3"></div><div class="a" style="left:402px;top:58px;width:10px;height:4px;background:#e9e9e9;z-index:3"></div><div class="frame"></div>
</body></html>
